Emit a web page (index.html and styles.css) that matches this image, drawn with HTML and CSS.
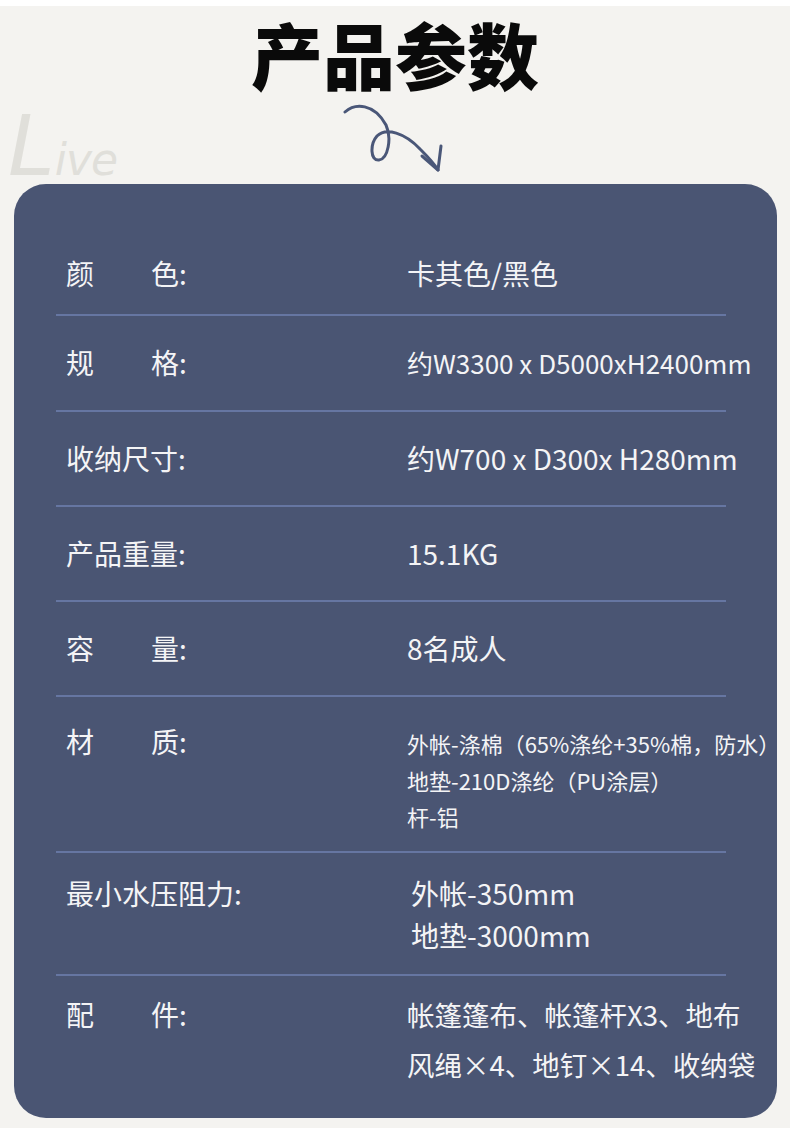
FILE: index.html
```html
<!DOCTYPE html>
<html>

<head>
  <meta charset="utf-8">
  <title>产品参数</title>
  <link rel="stylesheet" href="styles.css">
</head>

<body>
  <div class="page">
    <div class="header">
      <span class="watermark">L<span class="watermark-small">ive</span></span>
      <h1 class="title">产品参数</h1>
      <svg class="arrow" width="100" height="75" viewBox="0 0 100 75">
        <path d="M2,12 C12,3 31,3 43,25 C49,38 45,59 36,60 C27,61 27,44 34,36 C43,27 62,33 77,49 C85,57 91,63 95,70" />
        <path d="M79,56 L95,70 L98,46" />
      </svg>
    </div>

    <div class="card">
      <div class="row row-first">
        <div class="label"><span class="gap">颜</span>色:</div>
        <div class="value">卡其色/黑色</div>
      </div>
      <div class="row">
        <div class="label"><span class="gap">规</span>格:</div>
        <div class="value value-narrow">约W3300 x D5000xH2400mm</div>
      </div>
      <div class="row">
        <div class="label">收纳尺寸:</div>
        <div class="value">约W700 x D300x H280mm</div>
      </div>
      <div class="row">
        <div class="label">产品重量:</div>
        <div class="value">15.1KG</div>
      </div>
      <div class="row">
        <div class="label"><span class="gap">容</span>量:</div>
        <div class="value">8名成人</div>
      </div>
      <div class="row row-material">
        <div class="label"><span class="gap">材</span>质:</div>
        <div class="value value-small">
          外帐-涤棉（65%涤纶+35%棉，防水）<br>
          地垫-210D涤纶（PU涂层）<br>
          杆-铝
        </div>
      </div>
      <div class="row row-pressure">
        <div class="label">最小水压阻力:</div>
        <div class="value value-pressure">
          外帐-350mm<br>
          地垫-3000mm
        </div>
      </div>
      <div class="row row-parts">
        <div class="label"><span class="gap">配</span>件:</div>
        <div class="value value-parts">
          帐篷篷布、帐篷杆X3、地布<br>
          风绳×4、地钉×14、收纳袋
        </div>
      </div>
    </div>
  </div>
</body>

</html>
```

FILE: styles.css
```css
html {
  background-color: #ffffff;
}

body {
  margin: 0;
  font-family: "Noto Sans CJK SC", "Noto Sans", sans-serif;
}

.page {
  width: 790px;
  height: 1128px;
  background: linear-gradient(#ffffff 0 6px, #f4f3f0 6px);
  position: relative;
}

/* Cabecera */
.header {
  height: 184px;
  display: flex;
  flex-direction: column;
  align-items: center;
}

.title {
  margin: 0;
  font-size: 72px;
  line-height: normal;
  font-weight: 900;
  color: #0a0a0a;
}

.arrow {
  margin-top: -5px;
  margin-left: -4px;
  fill: none;
  stroke: #4a5778;
  stroke-width: 3;
  stroke-linecap: round;
  stroke-linejoin: round;
}

.watermark {
  position: absolute;
  left: 8px;
  top: 104px;
  font-family: "DejaVu Sans", sans-serif;
  font-style: italic;
  font-weight: 200;
  font-size: 84px;
  line-height: 84px;
  color: #e0dfda;
}

.watermark-small {
  font-size: 44px;
  letter-spacing: -1px;
}

/* Tarjeta de datos */
.card {
  position: relative;
  margin-left: 14px;
  width: 763px;
  height: 934px;
  box-sizing: border-box;
  padding: 35px 51px 0 42px;
  background-color: #4a5573;
  border-radius: 32px;
  color: #f4f4f6;
}

.row {
  display: flex;
  align-items: baseline;
  padding: 28px 0 29px 10px;
  border-bottom: 2px solid #6676a2;
  font-size: 28px;
  line-height: 36px;
  white-space: nowrap;
}

.row-first {
  padding: 36px 0 23px 10px;
}

.row-material {
  padding: 26px 0 16px 10px;
}

.row-pressure {
  padding: 19px 0 18px 10px;
}

.row-parts {
  padding: 13px 0 0 10px;
  border-bottom: none;
}

.label {
  width: 341px;
  flex-shrink: 0;
}

.gap {
  margin-right: 57px;
}

.value-narrow {
  font-size: 26px;
}

.value-small {
  font-size: 22px;
  line-height: 36.5px;
}

.value-pressure {
  padding-left: 4px;
  line-height: 42px;
}

.value-parts {
  font-size: 27.5px;
  line-height: 50px;
}
```
